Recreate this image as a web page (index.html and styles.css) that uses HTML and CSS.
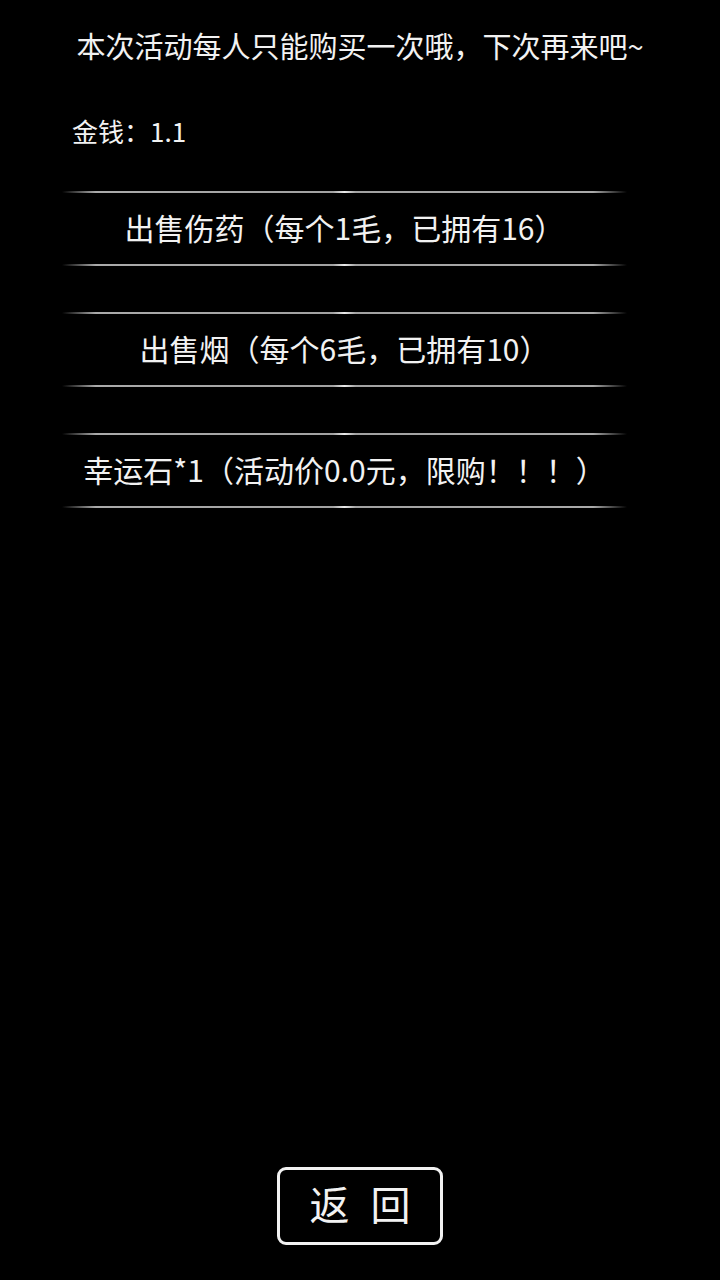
FILE: index.html
```html
<!DOCTYPE html>
<html lang="zh-CN">
<head>
<meta charset="utf-8">
<title>商店</title>
<link rel="stylesheet" href="styles.css">
</head>
<body>
<div class="screen">
  <p class="notice">本次活动每人只能购买一次哦，下次再来吧~</p>
  <p class="money">金钱：1.1</p>
  <ul class="shop">
    <li class="item">出售伤药（每个1毛，已拥有16）</li>
    <li class="item">出售烟（每个6毛，已拥有10）</li>
    <li class="item">幸运石*1（活动价0.0元，限购！！！）</li>
  </ul>
  <div class="footer">
    <button class="back">返 回</button>
  </div>
</div>
</body>
</html>
```

FILE: styles.css
```css
html, body {
  margin: 0;
  padding: 0;
  background: #000;
}

.screen {
  width: 720px;
  height: 1280px;
  display: flex;
  flex-direction: column;
  color: #f2f2f2;
  font-family: "Noto Sans CJK SC", "Noto Sans", sans-serif;
}

.notice {
  margin: 25px 0 0;
  text-align: center;
  font-size: 29px;
  line-height: 40px;
}

.money {
  margin: 48px 0 0 72px;
  font-size: 26px;
  line-height: 36px;
}

.shop {
  list-style: none;
  margin: 42px 0 0 62px;
  padding: 0;
  width: 565px;
  display: flex;
  flex-direction: column;
  gap: 46px;
}

.item {
  position: relative;
  height: 75px;
  box-sizing: border-box;
  padding-bottom: 4px;
  display: flex;
  align-items: center;
  justify-content: center;
  font-size: 30px;
  white-space: nowrap;
}

/* faded rule above and below each shop entry */
.item::before,
.item::after {
  content: "";
  position: absolute;
  left: 0;
  right: 0;
  height: 2px;
  background: linear-gradient(90deg,
    rgba(200,200,200,0) 0%,
    rgba(200,200,200,0.85) 6%,
    rgba(190,190,190,0.85) 48%,
    rgba(235,235,235,1) 50%,
    rgba(190,190,190,0.85) 52%,
    rgba(200,200,200,0.85) 94%,
    rgba(200,200,200,0) 100%);
}
.item::before { top: 0; }
.item::after { bottom: 0; }

.footer {
  margin-top: auto;
  margin-bottom: 35px;
  display: flex;
  justify-content: center;
}

.back {
  width: 166px;
  height: 78px;
  box-sizing: border-box;
  border: 3px solid #f2f2f2;
  border-radius: 9px;
  background: #000;
  color: #f2f2f2;
  font-family: "Noto Sans CJK SC", "Noto Sans", sans-serif;
  font-size: 40px;
  letter-spacing: 6px;
  padding: 0 0 6px 6px;
}
```
